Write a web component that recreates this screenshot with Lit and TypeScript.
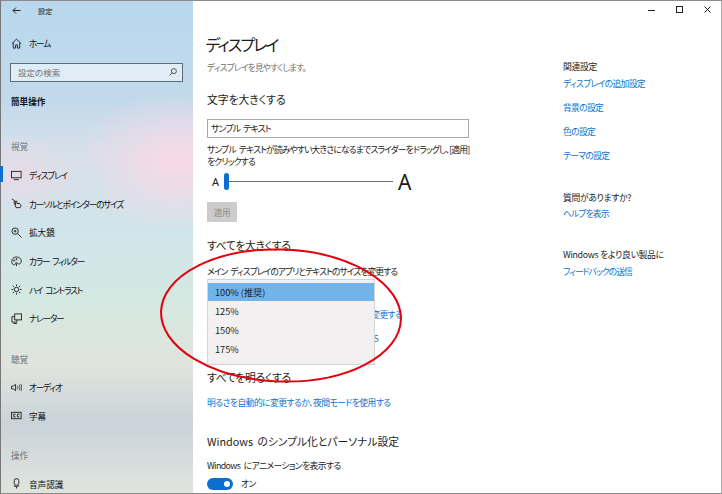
import { LitElement, html, css, svg } from "lit";
import { customElement } from "lit/decorators.js";

const ic = (c: unknown) => html`<svg class="ic" viewBox="0 0 12 12" fill="none" stroke="#222" stroke-width="1">${c}</svg>`;
const icons: Record<string, unknown> = {
  display: svg`<rect x="0.5" y="1.5" width="10.5" height="7"/><path d="M3 10.5h5.5"/>`,
  cursor: svg`<path d="M1 1l3.5 2.5L3 4.5l2 3"/><path d="M5.5 10.5L4 6.5h1V3.5h1.5V6h3l1.5 2.5-1 2z"/>`,
  zoom: svg`<circle cx="4.5" cy="4.5" r="3.5"/><path d="M7 7l4.5 4.5M3 4.5h3M4.5 3v3"/>`,
  color: svg`<path d="M6 1C3 1 .8 3.2.8 6S2.5 10 4 9.5 4.5 8 5 7.5 7 7.5 8 8.5 11.2 8 11.2 5.5 9 1 6 1z"/><circle cx="3.4" cy="5" r=".7"/><circle cx="6" cy="3.4" r=".7"/><path d="M6 11V8"/>`,
  contrast: svg`<circle cx="6" cy="6" r="2.4"/><path d="M6 .5v2M6 9.5v2M.5 6h2M9.5 6h2M2 2l1.5 1.5M8.5 8.5L10 10M2 10l1.5-1.5M8.5 3.5L10 2"/>`,
  narrator: svg`<rect x="4" y="1" width="7.5" height="6.5"/><path d="M4 4H1v6h5.5V7.5M2.5 11.5h4"/>`,
  audio: svg`<path d="M.5 4.5h2L5 2.5v7L2.5 7.5h-2z"/><path d="M7 4.2q1 1.8 0 3.6M9 3q1.8 3 0 6M10.8 2q2 4 0 8" stroke-width=".8"/>`,
  cc: svg`<rect x=".5" y="2.5" width="10.5" height="7"/><path d="M5 4.5H3v3h2M9 4.5H7v3h2"/>`,
  mic: svg`<rect x="3.5" y=".8" width="5" height="7" rx="2"/><path d="M3 8.5q3 2 6 0M6 9.5v2"/>`,
};
const row = (k: string, t: string, cls = "") =>
  html`<div class="row ${cls}">${ic(icons[k])}<span>${t}</span></div>`;

@customElement("app-root")
export class AppRoot extends LitElement {
  static styles = css`
    :host {
      display: block; width: 722px; height: 494px; overflow: hidden; position: relative; background: #fff;
      font-family: "Noto Sans CJK JP", "Noto Sans", sans-serif; font-feature-settings: "palt"; color: #1c1c1c;
      font-size: 8.8px; line-height: 12px; word-spacing: 2px;
    }
    .win { display: flex; width: 722px; height: 494px; box-sizing: border-box; border: 1px solid #8a8a8a; border-left-color: #777; border-right-color: #aaa; }
    .side {
      width: 192px; flex: none; box-sizing: border-box; display: flex; flex-direction: column;
      background:
        conic-gradient(rgba(255,255,255,.14) 25%, transparent 0 50%, rgba(255,255,255,.14) 0 75%, transparent 0) 0 0 / 2px 2px,
        radial-gradient(ellipse 100px 70px at 175px 160px, #f8d6e4 0%, rgba(248,214,228,0) 100%),
        radial-gradient(ellipse 70px 40px at 20px 175px, #e6d8e6 0%, rgba(230,216,230,0) 100%),
        linear-gradient(180deg, #b3d5ec 0%, #bdd6ea 20%, #d2dde8 30%, #cde3e8 48%, #d2e6de 62%, #dde2da 74%, #c6d0d6 86%, #dde2dc 100%);
    }
    .top { height: 19px; display: flex; align-items: center; padding-left: 11px; flex: none; }
    .top span { margin-left: 17px; font-size: 7.2px; }
    .home { margin-top: 9px; }
    .row { height: 28.7px; display: flex; align-items: center; padding-left: 10px; gap: 7px; flex: none; position: relative; font-size: 8.6px; letter-spacing: -1.15px; color: #111; }
    .row.kanji { letter-spacing: 0; }
    .row.active::before { content: ""; position: absolute; left: -1px; top: 5px; width: 3px; height: 16px; background: #0b6fd0; }
    .ic { width: 11px; height: 11px; flex: none; }
    .search { margin: 5px 10px 0 9px; height: 19px; box-sizing: border-box; border: 1px solid #5e6c78; background: rgba(235,243,250,.75); display: flex; align-items: center; justify-content: space-between; padding: 0 5px 0 7px; color: #70757a; font-size: 8.5px; flex: none; }
    .search svg { width: 8px; height: 8px; }
    .cat { margin: 13px 0 0 10px; font-weight: 700; height: 12px; font-size: 8.6px; color: #111; flex: none; }
    .grp { margin: 20px 0 8px 10px; color: #70757a; font-size: 8.6px; height: 12px; flex: none; }
    .grp.first { margin-top: 33px; margin-bottom: 9px; }
    .grp.last { margin-top: 19px; }
    .main { width: 356px; flex: none; padding-left: 14px; box-sizing: border-box; position: relative; display: flex; flex-direction: column; }
    .h1 { margin: 32px 0 0 -1.5px; font-size: 16px; line-height: 22px; font-weight: 400; letter-spacing: -1.9px; }
    .sub { margin-top: 6px; color: #6f6f6f; font-size: 8.6px; height: 12px; letter-spacing: -.7px; }
    .h2 { font-size: 10.8px; line-height: 16px; font-weight: 400; flex: none; }
    .h2.first { margin-top: 18px; }
    .h2.kana { letter-spacing: -.3px; }
    .input { margin-top: 12px; width: 262px; height: 19px; box-sizing: border-box; border: 1px solid #a8a8a8; padding-left: 3px; display: flex; align-items: center; font-size: 9px; letter-spacing: -.95px; flex: none; }
    .help { margin-top: 6px; line-height: 12px; font-size: 8.8px; letter-spacing: -.85px; white-space: nowrap; }
    .slider { display: flex; align-items: center; height: 21px; margin-top: 3px; padding-left: 5px; flex: none; }
    .slider .a1 { font-size: 11px; font-family: "Noto Sans", sans-serif; }
    .thumb { width: 5px; height: 17px; border-radius: 2.5px; background: #0b6fd0; margin-left: 5px; flex: none; }
    .track { width: 164px; height: 1px; background: #6e6e6e; }
    .slider .a2 { font-size: 21px; font-family: "Noto Sans", sans-serif; margin-left: 5px; }
    .btn { margin-top: 10px; width: 30px; height: 20px; background: #cccccc; color: #8f8f8f; display: flex; align-items: center; justify-content: center; font-size: 8.6px; flex: none; }
    .sect1 { margin-top: 15px; }
    .label { margin-top: 13px; font-size: 8.8px; height: 12px; letter-spacing: -.98px; white-space: nowrap; flex: none; }
    .label.anim { margin-top: 11px; letter-spacing: -.6px; }
    .link { color: #0a73d1; font-size: 8.8px; line-height: 12px; letter-spacing: -.7px; flex: none; }
    .hid1 { margin-top: 31px; text-align: right; width: 195px; }
    .hid2 { margin-top: 12px; text-align: right; width: 171px; }
    .sect2 { margin-top: 24px; }
    .l3 { margin-top: 12px; letter-spacing: -.55px; }
    .sect3 { margin-top: 24px; }
    .toggle { display: flex; align-items: center; margin-top: 6px; gap: 8px; font-size: 8.8px; letter-spacing: -.6px; flex: none; }
    .sw { width: 26px; height: 12px; border-radius: 6px; background: #0b6fd0; position: relative; flex: none; }
    .sw::after { content: ""; position: absolute; right: 3px; top: 3px; width: 6px; height: 6px; border-radius: 50%; background: #fff; }
    .drop { position: absolute; left: 14px; top: 278px; width: 168px; height: 86px; box-sizing: border-box; background: #f2f0f0; border: 1px solid #d4d4d4; padding: 3px 0 0 0; font-size: 9.2px; word-spacing: 0; }
    .opt { height: 19px; display: flex; align-items: center; padding-left: 7px; }
    .opt.on { background: #71b4ea; height: 18px; }
    .right { flex: 1; padding: 60px 0 0 14px; display: flex; flex-direction: column; font-size: 8.8px; word-spacing: 0; }
    .right .t { height: 12px; letter-spacing: -.3px; flex: none; }
    .right .link { height: 12px; margin-top: 12px; }
    .right .t + .link { margin-top: 5px; }
    .right .t.g { margin-top: 30px; }
    .right .t.g + .link { margin-top: 4px; letter-spacing: -.9px; }
    .right .t.g2 { margin-top: 29px; }
    .right .t.g2 + .link { letter-spacing: -1px; }
    .caps { position: absolute; top: 5px; right: 0; display: flex; }
    .caps svg { width: 10px; height: 10px; margin-right: 18px; }
    .caps svg:last-child { margin-right: 9px; }
    .ellipse { position: absolute; left: 150px; top: 240px; width: 262px; height: 150px; pointer-events: none; }
  `;

  render() {
    return html`
      <div class="win">
        <div class="side">
          <div class="top">
            <svg width="9" height="9" viewBox="0 0 9 9" fill="none" stroke="#222"><path d="M8.5 4.5H1M4 1.5l-3 3 3 3"/></svg>
            <span>設定</span>
          </div>
          <div class="row home">
            ${ic(svg`<path d="M1 6.2L6 1.2l5 5M2.5 5v6h2.5V7.5h2V11h2.5V5"/>`)}<span>ホーム</span>
          </div>
          <div class="search">
            <span>設定の検索</span>
            <svg viewBox="0 0 9 9" fill="none" stroke="#444"><circle cx="5.5" cy="3.5" r="2.8"/><path d="M3.5 5.5L.8 8.2"/></svg>
          </div>
          <div class="cat">簡単操作</div>
          <div class="grp first">視覚</div>
          ${row("display", "ディスプレイ", "active")}
          ${row("cursor", "カーソルとポインターのサイズ")}
          ${row("zoom", "拡大鏡", "kanji")}
          ${row("color", "カラー フィルター")}
          ${row("contrast", "ハイ コントラスト")}
          ${row("narrator", "ナレーター")}
          <div class="grp">聴覚</div>
          ${row("audio", "オーディオ")}
          ${row("cc", "字幕", "kanji")}
          <div class="grp last">操作</div>
          ${row("mic", "音声認識", "kanji")}
        </div>
        <div class="main">
          <div class="h1">ディスプレイ</div>
          <div class="sub">ディスプレイを見やすくします。</div>
          <div class="h2 first">文字を大きくする</div>
          <div class="input">サンプル テキスト</div>
          <div class="help">サンプル テキストが読みやすい大きさになるまでスライダーをドラッグし、[適用]<br />をクリックする</div>
          <div class="slider">
            <span class="a1">A</span><span class="thumb"></span><span class="track"></span><span class="a2">A</span>
          </div>
          <div class="btn">適用</div>
          <div class="h2 kana sect1">すべてを大きくする</div>
          <div class="label">メイン ディスプレイのアプリとテキストのサイズを変更する</div>
          <div class="link hid1">アプリと他の項目のサイズを変更する</div>
          <div class="link hid2">カスタム スケーリング オプションS</div>
          <div class="h2 kana sect2">すべてを明るくする</div>
          <div class="link l3">明るさを自動的に変更するか、夜間モードを使用する</div>
          <div class="h2 sect3">Windows のシンプル化とパーソナル設定</div>
          <div class="label anim">Windows にアニメーションを表示する</div>
          <div class="toggle"><span class="sw"></span><span>オン</span></div>
          <div class="drop">
            <div class="opt on">100% (推奨)</div>
            <div class="opt">125%</div>
            <div class="opt">150%</div>
            <div class="opt">175%</div>
          </div>
        </div>
        <div class="right">
          <div class="t">関連設定</div>
          <div class="link">ディスプレイの追加設定</div>
          <div class="link">背景の設定</div>
          <div class="link">色の設定</div>
          <div class="link">テーマの設定</div>
          <div class="t g">質問がありますか?</div>
          <div class="link">ヘルプを表示</div>
          <div class="t g2">Windows をより良い製品に</div>
          <div class="link">フィードバックの送信</div>
        </div>
      </div>
      <div class="caps">
        <svg viewBox="0 0 10 10" fill="none" stroke="#222"><path d="M1 5.5h7"/></svg>
        <svg viewBox="0 0 10 10" fill="none" stroke="#222"><rect x="1.5" y="1.5" width="6" height="6"/></svg>
        <svg viewBox="0 0 10 10" fill="none" stroke="#222"><path d="M1.5 1.5l6 6M7.5 1.5l-6 6"/></svg>
      </div>
      <svg class="ellipse" viewBox="0 0 262 150" fill="none">
        <ellipse cx="131" cy="75.5" rx="120" ry="66" transform="rotate(2 131 75)" stroke="#e2000f" stroke-width="2"/>
      </svg>
    `;
  }
}
